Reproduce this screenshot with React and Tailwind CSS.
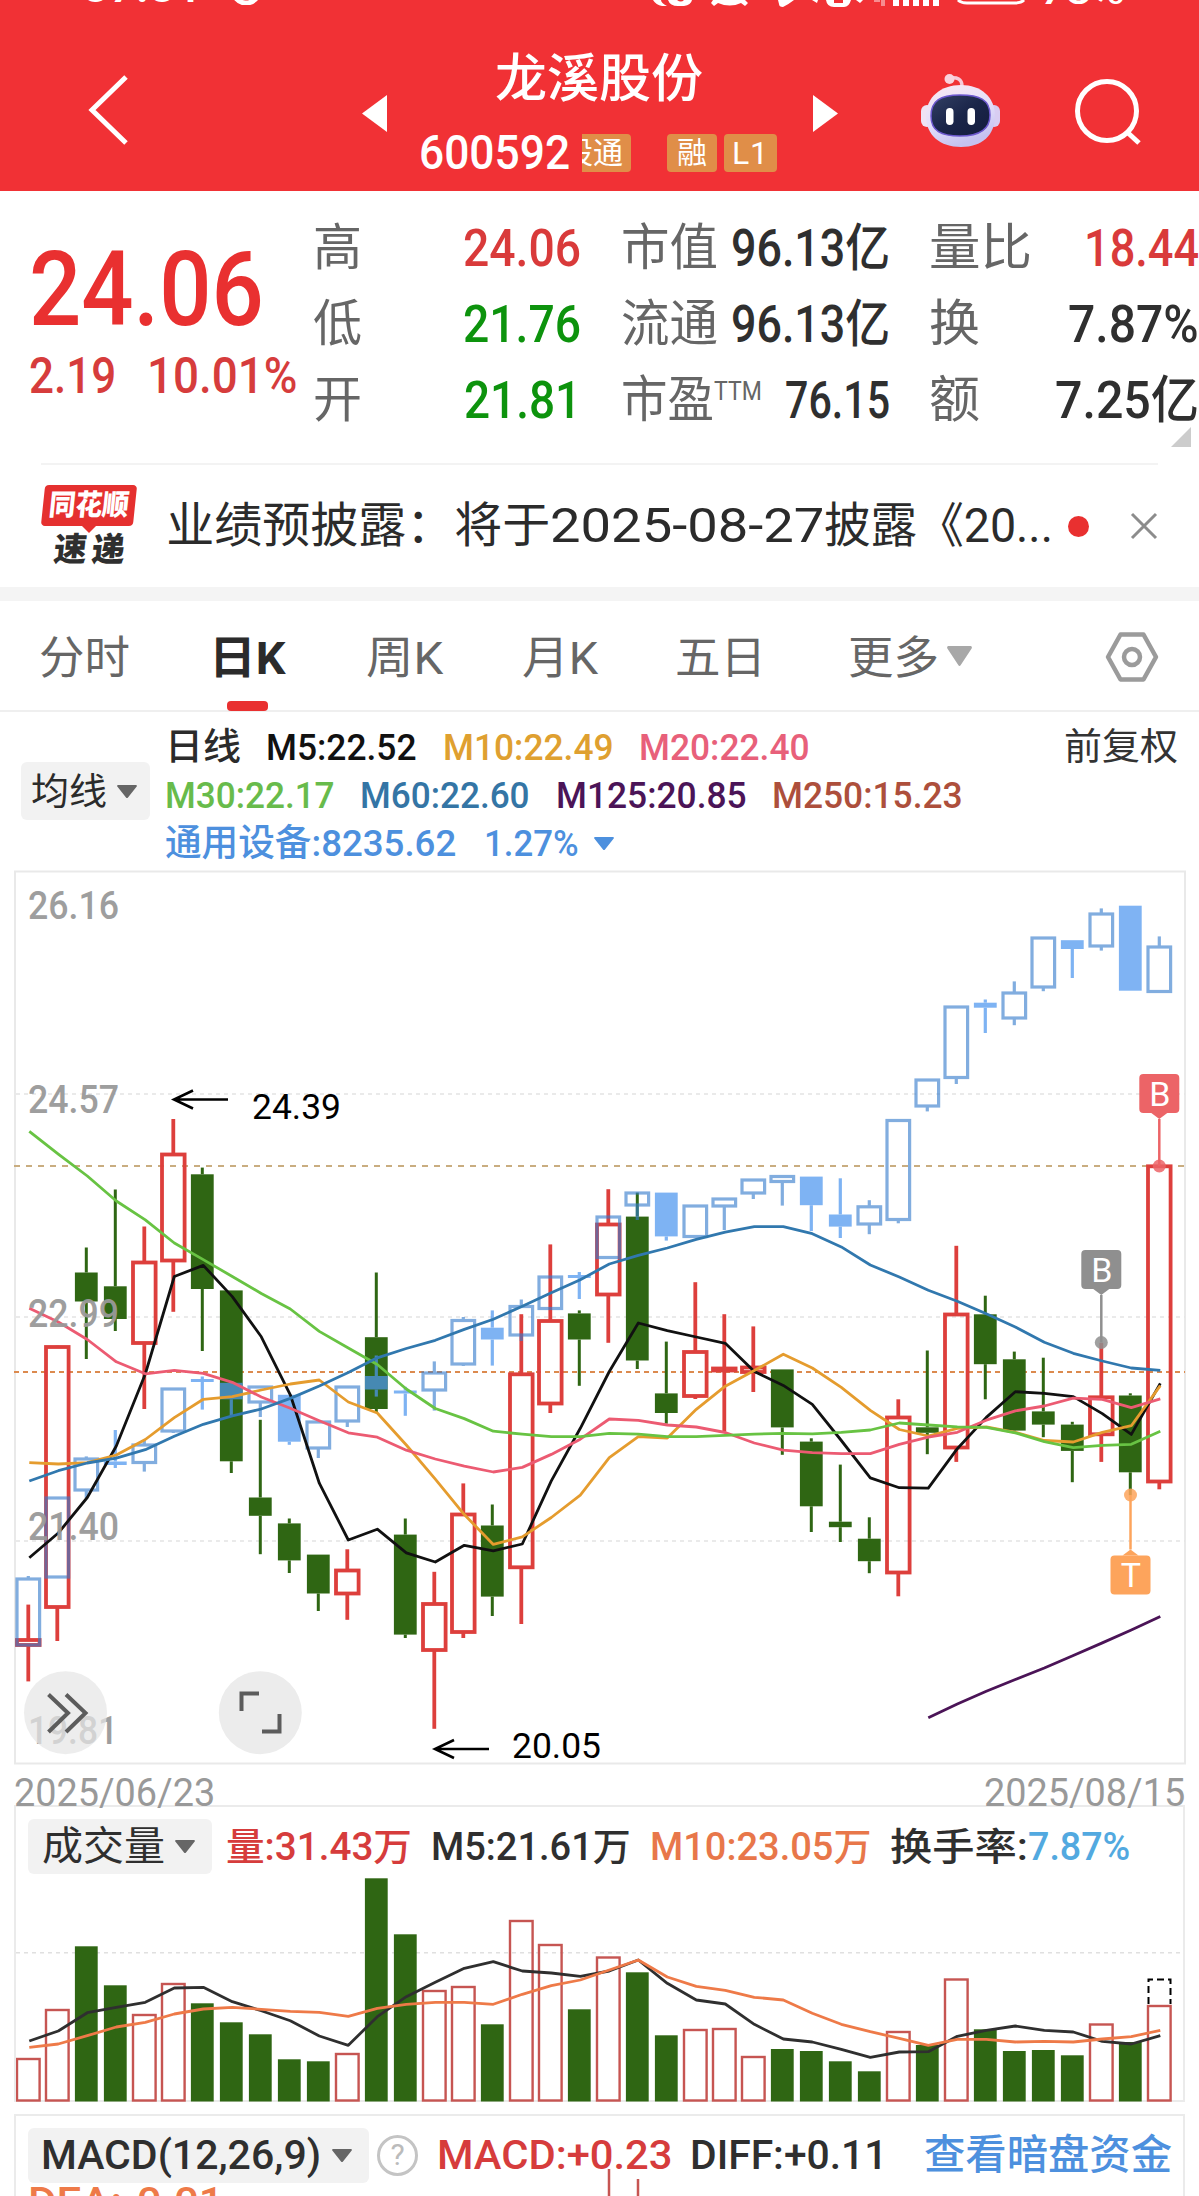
import React, { useLayoutEffect, useRef } from "react";

const FONT = "font-[Roboto,'Noto_Sans_CJK_SC',sans-serif]";

// x centre of the k-th trading day
const X0 = 28.3;
const STEP = 29;
const cx = (k) => X0 + STEP * k;

// [up, high, top, bottom, low]
const candles = [
  [1, 1604.6, 1640, 1645, 1681.4],
  [1, 1345.7, 1347, 1607, 1641],
  [0, 1247.5, 1272.5, 1301.5, 1359],
  [0, 1189.5, 1286.3, 1319, 1331],
  [1, 1226.5, 1262.5, 1343, 1409],
  [1, 1119, 1154.5, 1260.5, 1311.8],
  [0, 1167.6, 1174.3, 1289, 1351],
  [0, 1290.4, 1290.4, 1461.3, 1473],
  [0, 1419.8, 1497.5, 1515.8, 1554.2],
  [0, 1518.5, 1523.4, 1560.4, 1573],
  [0, 1554.6, 1554.6, 1593.5, 1611],
  [1, 1549.3, 1570.5, 1593.5, 1619.8],
  [0, 1272.5, 1337.2, 1409, 1412],
  [0, 1518.5, 1534.6, 1634.6, 1638],
  [1, 1571.8, 1604, 1650, 1728.8],
  [1, 1483.4, 1514.5, 1632, 1638],
  [0, 1504.5, 1525.5, 1596.6, 1616],
  [1, 1314.2, 1374.3, 1567.3, 1624],
  [1, 1244.4, 1321, 1403.5, 1413],
  [0, 1310.4, 1313.4, 1339.5, 1385.8],
  [1, 1189.2, 1224.5, 1294.5, 1342.8],
  [0, 1192.6, 1216.6, 1360.5, 1369],
  [0, 1341.6, 1393.4, 1413, 1423.7],
  [1, 1282.2, 1352, 1396, 1399],
  [1, 1314.2, 1368.5, 1370.5, 1431.6],
  [1, 1326.4, 1367.5, 1372, 1392],
  [0, 1369.4, 1369.4, 1427.4, 1454.8],
  [0, 1438.3, 1441.6, 1506.3, 1532],
  [0, 1464.6, 1521.7, 1527.2, 1542],
  [0, 1517.3, 1538.7, 1561.2, 1573.2],
  [1, 1399.3, 1417.5, 1572.5, 1596.3],
  [0, 1350.5, 1427.3, 1432.8, 1454.2],
  [1, 1245.8, 1314.5, 1447.5, 1461.9],
  [0, 1295.7, 1314.3, 1364.2, 1399.3],
  [0, 1351.6, 1359.3, 1430.6, 1431],
  [0, 1357.7, 1411.4, 1424.6, 1437.2],
  [0, 1421.8, 1424.6, 1450.9, 1482.2],
  [1, 1342.8, 1397.3, 1434.3, 1461.9],
  [0, 1393.3, 1395.5, 1472.3, 1495.3],
  [1, 1165.1, 1166.3, 1481.5, 1489.3],
];

// sector index overlay, [hollow, high, top, bottom, low]
const sector = [
  [1, 1576, 1579, 1645, 1646],
  [1, 1497, 1498, 1577, 1578],
  [1, 1456.4, 1459, 1490, 1498.4],
  [0, 1430, 1461.5, 1465, 1468],
  [1, 1440.4, 1445, 1462.5, 1471.6],
  [1, 1388, 1389, 1431, 1433],
  [0, 1376.5, 1379, 1382, 1409.6],
  [0, 1382.8, 1382.8, 1399.3, 1415.8],
  [1, 1386, 1387, 1402, 1417],
  [0, 1394.8, 1394.8, 1441.7, 1444.8],
  [1, 1421, 1422, 1448, 1458],
  [1, 1386, 1387, 1421, 1427],
  [0, 1355.5, 1376, 1389.5, 1396.6],
  [0, 1386.8, 1390.5, 1393.5, 1415.8],
  [1, 1361.4, 1373, 1390, 1410.6],
  [1, 1317, 1320.5, 1364, 1366],
  [0, 1310.4, 1327.7, 1339.5, 1365.6],
  [1, 1299.5, 1306.5, 1335, 1341],
  [1, 1276, 1277, 1308.5, 1309],
  [0, 1272, 1275, 1278, 1299],
  [1, 1216, 1217, 1257.5, 1259],
  [1, 1192, 1193, 1205, 1220],
  [0, 1192.6, 1192.6, 1236.4, 1240.6],
  [1, 1205, 1206, 1236.5, 1237],
  [1, 1198, 1199, 1206, 1230],
  [1, 1179, 1180, 1193, 1199],
  [1, 1175.5, 1176.5, 1181.5, 1205.6],
  [0, 1176.6, 1176.6, 1205.2, 1231],
  [0, 1178.3, 1214.5, 1226.6, 1238],
  [1, 1200.2, 1206.8, 1224, 1234.2],
  [1, 1119.5, 1120.5, 1219.5, 1223.3],
  [1, 1079, 1080, 1106, 1111.4],
  [1, 1006, 1007, 1077.5, 1084],
  [0, 999.5, 1002.7, 1007.7, 1033],
  [1, 981.4, 993, 1018, 1025.2],
  [1, 937, 938, 987, 991.2],
  [0, 940.2, 940.2, 949, 978],
  [1, 908.4, 914, 946, 950.6],
  [0, 905.7, 905.7, 990.7, 990.7],
  [1, 936.4, 947, 991.5, 992],
];

const averages = [
  { color: "#111111", from: 0, y: [1557.8, 1533, 1497.5, 1446, 1374, 1276.5, 1265.4, 1296.6, 1336.8, 1394.8, 1483.2, 1540, 1529.2, 1552.9, 1562, 1545.3, 1550.8, 1544, 1480.9, 1428.3, 1371.5, 1323, 1330.6, 1337, 1343.3, 1371.5, 1385.4, 1404.3, 1440.5, 1477.8, 1487.7, 1488.2, 1448.7, 1417.4, 1391.7, 1393.3, 1396.6, 1413.6, 1434.4, 1383.4] },
  { color: "#e59c2e", from: 0, y: [1462.7, 1464, 1462.7, 1455, 1439.5, 1417.6, 1399.3, 1396.6, 1390, 1384, 1380, 1402, 1413, 1445, 1479.2, 1514.6, 1544.4, 1536.9, 1517.5, 1495.2, 1457.7, 1436.7, 1438, 1409.3, 1386.2, 1370.6, 1354.2, 1368, 1387.3, 1410.3, 1429.5, 1436, 1428.4, 1426.8, 1432.3, 1440.5, 1442, 1432.3, 1425.7, 1385.6] },
  { color: "#ec5b72", from: 0, y: [1308.2, 1322, 1339.5, 1361.8, 1373.8, 1370.3, 1373.4, 1382.3, 1397, 1408.2, 1420.7, 1432.8, 1437.2, 1450.2, 1459, 1466.2, 1472, 1467.4, 1454.4, 1439.2, 1419, 1420.3, 1425, 1427, 1432.5, 1443, 1450.2, 1452.6, 1453.6, 1453.6, 1444.3, 1437.2, 1432.3, 1420.2, 1410.9, 1406, 1398.2, 1399.4, 1407.6, 1398.8] },
  { color: "#68c343", from: 0, y: [1131.4, 1154.2, 1176, 1201, 1219.8, 1243, 1259.6, 1276.5, 1293.5, 1309, 1331.4, 1348, 1364.5, 1389, 1408.5, 1418.6, 1431.2, 1434.2, 1436.7, 1436.7, 1433.3, 1434.2, 1436.7, 1436.7, 1435.4, 1434.2, 1433.3, 1433.9, 1432.3, 1430, 1423, 1425, 1426.8, 1427.3, 1432.8, 1441.6, 1447.6, 1445.4, 1444.3, 1431.2] },
  { color: "#3178ae", from: 0, y: [1481, 1470.7, 1463, 1458.2, 1449.7, 1436.3, 1424.3, 1415.8, 1409, 1398.4, 1386, 1372.5, 1357.8, 1348.5, 1340.3, 1329.4, 1319.3, 1306.2, 1292.8, 1279.7, 1264, 1255.3, 1248, 1239.3, 1232.2, 1226.7, 1226.7, 1233.7, 1246.9, 1265, 1277, 1290.2, 1301.2, 1313.8, 1327, 1342.3, 1353.3, 1361, 1368, 1370.3] },
  { color: "#4b1457", from: 31, y: [1717.8, 1704, 1691.2, 1679.5, 1668, 1655.5, 1642.9, 1630, 1616.6] },
];

// [up, top]
const volumes = [
  [1, 2059], [1, 2010], [0, 1946.3], [0, 1985.3], [1, 2015], [1, 1984], [0, 2003.3], [0, 2022.3],
  [0, 2034.3], [0, 2059.3], [0, 2061.3], [1, 2054], [0, 1878.3], [0, 1934.3], [1, 1991], [1, 1987],
  [0, 2024.3], [1, 1921], [1, 1945], [0, 2009.3], [1, 1957.5], [0, 1972.3], [0, 2035.3], [1, 2030],
  [1, 2029], [1, 2057], [0, 2049], [0, 2051], [0, 2061.3], [0, 2071.3], [1, 2032], [0, 2045],
  [1, 1979.5], [0, 2029.3], [0, 2051], [0, 2050], [0, 2055.3], [1, 2024.5], [0, 2042], [1, 2006],
];

const volumeAverages = [
  { color: "#2f2f2f", from: 0, y: [2041, 2031, 2012.7, 2007.3, 2002.3, 1988, 1987.3, 2001.7, 2010.7, 2020.7, 2036, 2045.3, 2016.7, 1996.7, 1982.3, 1968.3, 1961.7, 1971, 1973, 1976.3, 1971, 1960, 1983.3, 2000, 2004, 2024.3, 2039, 2042, 2049.3, 2057.3, 2052, 2051.7, 2036.3, 2030.3, 2026, 2030.3, 2032, 2041.3, 2044, 2035.7] },
  { color: "#ee7a48", from: 0, y: [2047.3, 2044, 2035.7, 2027, 2022.3, 2014, 2009, 2007.3, 2009.3, 2011.3, 2012.3, 2016.3, 2008.3, 2004.3, 2002.3, 2002.3, 2004.3, 1994.3, 1985.7, 1980, 1970, 1960, 1977, 1986.3, 1990.3, 1997.3, 2000, 2013.3, 2024.3, 2031.7, 2038.3, 2045.3, 2039.3, 2039.3, 2042, 2041.3, 2042, 2039, 2036.7, 2030.3] },
];

const quoteColumns = [
  {
    wrap: "ml-[17px] w-[268px]",
    rows: [
      ["高", "w-[49px]", "24.06", "w-[118px] text-[#d93a3a]"],
      ["低", "w-[49px]", "21.76", "w-[118px] text-[#0d930d]"],
      ["开", "w-[49px]", "21.81", "w-[117px] text-[#0d930d]"],
    ],
  },
  {
    wrap: "ml-[40px] w-[269px]",
    rows: [
      ["市值", "w-[97px]", "96.13亿", "w-[159px] text-[#2f2f2f]"],
      ["流通", "w-[97px]", "96.13亿", "w-[159px] text-[#2f2f2f]"],
      ["市盈", "w-[93px]", "76.15", "w-[105px] text-[#2f2f2f]", "TTM"],
    ],
  },
  {
    wrap: "ml-[39px] w-[270px]",
    rows: [
      ["量比", "w-[103px]", "18.44", "w-[115px] text-[#d93a3a]"],
      ["换", "w-[51px]", "7.87%", "w-[131px] text-[#2f2f2f]"],
      ["额", "w-[51px]", "7.25亿", "w-[144px] text-[#2f2f2f]"],
    ],
  },
];

// Text squeezed (or stretched) horizontally to the width of its box
function Fit({ className = "", children }) {
  const box = useRef(null);
  const text = useRef(null);

  useLayoutEffect(() => {
    const ratio = box.current.clientWidth / text.current.offsetWidth;
    text.current.style.transform = `scaleX(${ratio})`;
  }, [children]);

  return (
    <span ref={box} className={`block shrink-0 whitespace-nowrap leading-none ${className}`}>
      <span ref={text} className="inline-block origin-left leading-none">
        {children}
      </span>
    </span>
  );
}

function Caret({ className = "" }) {
  return (
    <svg viewBox="0 0 20 13" className={`shrink-0 ${className}`} preserveAspectRatio="none">
      <path d="M1 0h18a1 1 0 0 1 .7 1.600L11 12.400a1.300 1.300 0 0 1-2 0L.3 1.600A1 1 0 0 1 1 0z" fill="currentColor" />
    </svg>
  );
}

function StatusBar() {
  return (
    <div className="flex h-[8px] items-end overflow-hidden pl-[82px] text-white">
      <Fit className="mb-[-1px] w-[120px] text-[40px] font-medium">07:01</Fit>
      <svg className="ml-[26px] mb-[3px] h-[26px] w-[36px]" viewBox="0 0 36 26">
        <path d="M5 10a13 13 0 0 0 26 2" fill="none" stroke="#fff" strokeWidth="5" />
      </svg>
      <svg className="ml-[388px] h-[8px] w-[380px]" viewBox="0 0 380 8">
        <path d="M1 0q3 5 9 6h5q-6-3-6-6zM16 0q2 6 10 6h6q7-1 8-6h-8q-3 3-7 0z" fill="#fff" />
        <path d="M61 0h32l3 3-3 3-4-3q-11 5-23 0l-4 3-3-3z" fill="#fff" />
        <path d="M126 0h16q-5 4-11 7-4 0-4-3z" fill="#fff" />
        <path d="M160 0l5 3 1-3zM174 0q1 7 8 7h10q5 0 7-7h-8v3h-9V0zM204 0l4 3 3-3z" fill="#fff" />
        <path d="M222 0h6v2h-6zM229 0h4v6h-4z" fill="#fff" opacity=".45" />
        <path d="M241 0h6v6h-6zM251 0h6v6h-6zM261 0h6v6h-6zM271 0h6v6h-6zM281 0h6v6h-6z" fill="#fff" />
        <path d="M306 0q3 3 9 3h48q6 0 9-3" fill="none" stroke="#fff" strokeWidth="3" />
      </svg>
      <Fit className="mb-[-2px] ml-[8px] w-[84px] text-[36px] font-medium">78%</Fit>
    </div>
  );
}

function Robot() {
  return (
    <svg className="h-[74px] w-[80px]" viewBox="0 0 80 74">
      <defs>
        <linearGradient id="shell" x1="0" y1="0" x2="0.400" y2="1">
          <stop offset="0" stopColor="#fbeaf2" />
          <stop offset=".6" stopColor="#e3defa" />
          <stop offset="1" stopColor="#c5c2f0" />
        </linearGradient>
        <linearGradient id="visor" x1="0" y1="0" x2="1" y2="1">
          <stop offset="0" stopColor="#334064" />
          <stop offset=".5" stopColor="#1a2549" />
          <stop offset="1" stopColor="#141c3d" />
        </linearGradient>
      </defs>
      <path d="M29 5c7-1 12 1 12 8" fill="none" stroke="#f7c9d8" strokeWidth="3.500" />
      <circle cx="28.500" cy="6" r="5" fill="#f9d3dd" />
      <rect x="0" y="32" width="12" height="22" rx="6" fill="#efe3f4" />
      <rect x="67" y="32" width="12" height="22" rx="6" fill="#d8cdf2" />
      <path d="M40 12c20 0 34 12 34 31S61 74 40 74 5 62 5 43 20 12 40 12z" fill="url(#shell)" />
      <path d="M39 22c20 0 30 5 30 20S58 63 39 63 10 58 10 43s9-21 29-21z" fill="url(#visor)" stroke="#6d59cf" strokeWidth="1.500" />
      <rect x="25" y="35" width="7.500" height="17" rx="3.700" fill="#fff" />
      <rect x="46.500" y="35" width="7.500" height="17" rx="3.700" fill="#fff" />
    </svg>
  );
}

function Header() {
  return (
    <header className="h-[191px] overflow-hidden bg-[#f13135] text-white">
      <StatusBar />
      <div className="flex h-[183px] items-start">
        <svg className="ml-[86px] mt-[66px] h-[72px] w-[44px]" viewBox="0 0 44 72">
          <path d="M40 3L6 36l34 33" fill="none" stroke="#fff" strokeWidth="5" />
        </svg>
        <svg className="ml-[231px] mt-[86px] h-[39px] w-[27px]" viewBox="0 0 27 39">
          <path d="M26 1v37L1 19.500z" fill="#fff" />
        </svg>
        <div className="ml-[31px] flex w-[361px] flex-col">
          <Fit className="ml-[76px] mt-[46px] w-[208px] text-[52px] font-medium">龙溪股份</Fit>
          <div className="mt-[22px] flex items-center">
            <Fit className="w-[151px] text-[49px] font-medium">600592</Fit>
            <div className="ml-[12px] flex h-[38px] w-[49px] items-center justify-end overflow-hidden rounded-r-[4px] bg-[#e08e48] pr-[8px] text-[30px] leading-none">
              <span className="shrink-0">股通</span>
            </div>
            <div className="ml-[36px] flex h-[38px] w-[50px] items-center justify-center rounded-[4px] bg-[#e08e48] text-[30px] leading-none">
              融
            </div>
            <div className="ml-[7px] flex h-[38px] w-[53px] items-center justify-center rounded-[4px] bg-[#e08e48] text-[32px] leading-none tracking-wide">
              L1
            </div>
          </div>
        </div>
        <svg className="ml-[32px] mt-[86px] h-[39px] w-[27px]" viewBox="0 0 27 39">
          <path d="M1 1v37l25-18.500z" fill="#fff" />
        </svg>
        <div className="ml-[82px] mt-[65px]">
          <Robot />
        </div>
        <svg className="ml-[73px] mt-[70px] h-[68px] w-[68px]" viewBox="0 0 68 68">
          <circle cx="33" cy="33" r="29.500" fill="none" stroke="#fff" strokeWidth="5" />
          <path d="M53 54l12 11" stroke="#fff" strokeWidth="5" />
        </svg>
      </div>
    </header>
  );
}

function Quote() {
  return (
    <section className="flex h-[272px] pt-[19px]">
      <div className="ml-[29px] w-[267px] text-[#e93030]">
        <Fit className="mt-[28px] w-[235px] text-[103px] font-medium">24.06</Fit>
        <div className="mt-[10px] flex font-medium text-[#d63c3c]">
          <Fit className="w-[87px] text-[50px]">2.19</Fit>
          <Fit className="ml-[31px] w-[150px] text-[50px]">10.01%</Fit>
        </div>
      </div>
      {quoteColumns.map((col, i) => (
        <div key={i} className={`${col.wrap} shrink-0`}>
          {col.rows.map(([label, labelWidth, value, valueStyle, sup]) => (
            <div key={label} className="flex h-[76px] items-center justify-between">
              <div className="flex text-[#666]">
                <Fit className={`${labelWidth} text-[50px]`}>{label}</Fit>
                {sup && <Fit className="mt-[4px] w-[48px] text-[25px]">{sup}</Fit>}
              </div>
              <Fit className={`${valueStyle} text-[51px] font-medium`}>{value}</Fit>
            </div>
          ))}
          {i === 2 && (
            <svg className="ml-auto mr-[8px] mt-[-11px] h-[20px] w-[20px]" viewBox="0 0 20 20">
              <path d="M20 0v20H0z" fill="#ccc" />
            </svg>
          )}
        </div>
      ))}
    </section>
  );
}

function News() {
  return (
    <section className="mx-[41px] flex h-[124px] items-center border-t-2 border-[#f3f3f3]">
      <div className="flex h-[82px] w-[97px] flex-col items-center">
        <div className="flex h-[41px] w-[92px] -skew-x-6 items-center justify-center rounded-[4px] bg-[#e5302f]">
          <Fit className="w-[80px] text-[29px] font-black text-white">同花顺</Fit>
        </div>
        <svg className="h-[7px] w-[14px]" viewBox="0 0 14 7">
          <path d="M0 0h14L7 7z" fill="#e5302f" />
        </svg>
        <div className="flex -skew-x-6 gap-[5px] text-[33px] font-black leading-none text-[#2f2f2f]">
          <span>速</span>
          <span>递</span>
        </div>
      </div>
      <div className="ml-[29px] flex w-[887px] text-[48px] text-[#2b2b2b]">
        <Fit className="w-[384px]">业绩预披露：将于</Fit>
        <Fit className="w-[274px]">2025-08-27</Fit>
        <Fit className="w-[229px]">披露《20...</Fit>
      </div>
      <div className="ml-[15px] h-[21px] w-[21px] rounded-full bg-[#e93030]" />
      <svg className="ml-[41px] h-[28px] w-[28px] shrink-0" viewBox="0 0 28 28">
        <path d="M2 2l24 24M26 2L2 26" stroke="#8c8c8c" strokeWidth="3" />
      </svg>
    </section>
  );
}

function Tabs() {
  return (
    <nav className="flex h-[111px] items-start border-b-2 border-[#efefef] pt-[35px] text-[45px] text-[#666]">
      <Fit className="ml-[39px] w-[91px]">分时</Fit>
      <div className="ml-[79px] flex w-[76px] flex-col items-center">
        <Fit className="w-[77px] font-bold text-[#2b2b2b]">日K</Fit>
        <div className="mt-[20px] h-[10px] w-[41px] rounded-[4px] bg-[#e93030]" />
      </div>
      <Fit className="ml-[81px] w-[77px]">周K</Fit>
      <Fit className="ml-[79px] w-[76px]">月K</Fit>
      <Fit className="ml-[77px] w-[91px]">五日</Fit>
      <Fit className="ml-[82px] w-[91px]">更多</Fit>
      <Caret className="ml-[8px] mt-[10px] h-[20px] w-[25px] text-[#a8a8a8]" />
      <svg className="ml-[133px] mt-[-5px] h-[52px] w-[54px]" viewBox="0 0 54 52">
        <path d="M15.500 3.500h23L51 26 38.500 48.500h-23L3 26z" fill="none" stroke="#9b9b9b" strokeWidth="4.500" strokeLinejoin="round" />
        <circle cx="27" cy="26" r="8" fill="none" stroke="#9b9b9b" strokeWidth="4.500" />
      </svg>
    </nav>
  );
}

function Averages() {
  return (
    <section className="flex h-[155px] pt-[14px] text-[37px] font-medium">
      <div className="ml-[21px] mt-[36px] flex h-[58px] w-[129px] items-center rounded-[6px] bg-[#f2f2f2] pl-[10px]">
        <Fit className="mt-[3px] w-[76px] font-normal text-[#2b2b2b]">均线</Fit>
        <Caret className="ml-[10px] h-[13px] w-[20px] text-[#666]" />
      </div>
      <div className="ml-[15px] mt-[3px] flex w-[1013px] flex-col gap-[11px]">
        <div className="flex">
          <Fit className="w-[76px] text-[#2b2b2b]">日线</Fit>
          <Fit className="ml-[25px] w-[151px] text-[#111]">M5:22.52</Fit>
          <Fit className="ml-[26px] w-[171px] text-[#dfa030]">M10:22.49</Fit>
          <Fit className="ml-[25px] w-[171px] text-[#e8607a]">M20:22.40</Fit>
          <Fit className="ml-auto w-[114px] font-normal text-[#333]">前复权</Fit>
        </div>
        <div className="flex">
          <Fit className="w-[170px] text-[#68bb4b]">M30:22.17</Fit>
          <Fit className="ml-[25px] w-[170px] text-[#3475a5]">M60:22.60</Fit>
          <Fit className="ml-[26px] w-[191px] text-[#4b1457]">M125:20.85</Fit>
          <Fit className="ml-[25px] w-[191px] text-[#ad4f3c]">M250:15.23</Fit>
        </div>
        <div className="flex items-center text-[#4d90de]">
          <Fit className="w-[291px]">通用设备:8235.62</Fit>
          <Fit className="ml-[28px] w-[95px]">1.27%</Fit>
          <Caret className="ml-[15px] h-[13px] w-[20px]" />
        </div>
      </div>
    </section>
  );
}

function Candle({ x, color, width, hollow, data, opacity = 1 }) {
  const [, high, top, bottom, low] = data;
  return (
    <g stroke={color} strokeWidth={width} opacity={opacity}>
      {high < top && <line x1={x} x2={x} y1={high} y2={top} />}
      {low > bottom && <line x1={x} x2={x} y1={bottom} y2={low} />}
      {hollow ? (
        <rect x={x - 11.300} y={top} width="22.600" height={bottom - top} fill="none" />
      ) : (
        <rect x={x - 11.400} y={top} width="22.800" height={bottom - top} fill={color} stroke="none" />
      )}
    </g>
  );
}

function Lines({ series }) {
  return series.map((s) => (
    <polyline
      key={s.color}
      points={s.y.map((y, i) => `${cx(s.from + i) + 1},${y}`).join(" ")}
      fill="none"
      stroke={s.color}
      strokeWidth="2.800"
      strokeLinejoin="round"
    />
  ));
}

// Trade marker: a tag with a stem that ends in a dot on the candle
function Marker({ x, tag, dot, color, letter }) {
  const below = tag > dot;
  const edge = below ? tag - 19.500 : tag + 19.500;
  const tip = below ? edge - 6 : edge + 6;
  return (
    <g>
      <line x1={x} x2={x} y1={tip} y2={dot} stroke={color} strokeWidth="2.500" />
      <ellipse cx={x} cy={dot} rx="6.500" ry="6.500" fill={color} opacity=".85" />
      <rect x={x - 20} y={tag - 19.500} width="40" height="39" rx="4" fill={color} />
      <path d={`M${x - 8} ${edge}L${x} ${tip}L${x + 8} ${edge}z`} fill={color} />
      <text x={x + 0.500} y={tag + 12} textAnchor="middle" fontSize="34" fill="#fff">
        {letter}
      </text>
    </g>
  );
}

function KLineChart() {
  return (
    <svg className="block h-[898px] w-[1199px]" viewBox="0 867 1199 898">
      <rect x="15" y="871.500" width="1170" height="892" fill="none" stroke="#e9e9e9" strokeWidth="2" />
      {[1094, 1317, 1541].map((y) => (
        <line key={y} x1="16" x2="1185" y1={y} y2={y} stroke="#e4e4e4" strokeWidth="1.500" strokeDasharray="4 4" />
      ))}
      <line x1="14" x2="1185" y1="1166" y2="1166" stroke="#c9ad80" strokeWidth="2" strokeDasharray="6 6" />
      <line x1="14" x2="1185" y1="1372" y2="1372" stroke="#dc8a4e" strokeWidth="2" strokeDasharray="5 4" />

      {candles.map((c, k) => (
        <Candle key={k} x={cx(k)} data={c} hollow={c[0] === 1} color={c[0] ? "#dd3f3c" : "#2f6613"} width={c[0] ? 3.800 : 3} />
      ))}
      {sector.map((c, k) => (
        <Candle
          key={k}
          x={cx(k)}
          data={c}
          hollow={c[0] === 1}
          color={c[0] ? "#357ccd" : "#4f97ef"}
          opacity={c[0] ? 0.620 : 0.730}
          width={3.200}
        />
      ))}
      <Lines series={averages} />

      {/* Price scale */}
      <g fontSize="38" fontWeight="500" fill="#999" opacity=".95">
        <text x="28" y="919" textLength="91" lengthAdjust="spacingAndGlyphs">26.16</text>
        <text x="28" y="1113" textLength="91" lengthAdjust="spacingAndGlyphs">24.57</text>
        <text x="28" y="1327" textLength="91" lengthAdjust="spacingAndGlyphs">22.99</text>
        <text x="28" y="1540" textLength="91" lengthAdjust="spacingAndGlyphs">21.40</text>
        <text x="28" y="1744" textLength="90" lengthAdjust="spacingAndGlyphs">19.81</text>
      </g>

      {/* Period high and low */}
      <g fill="none" stroke="#000" strokeWidth="2.600">
        <path d="M228 1099.500H174M193 1090.500L174 1099.500L193 1108.500" />
        <path d="M489 1749H435M454 1740L435 1749L454 1758" />
      </g>
      <g fontSize="35" fill="#000">
        <text x="252" y="1119" textLength="89" lengthAdjust="spacingAndGlyphs">24.39</text>
        <text x="512" y="1758" textLength="89" lengthAdjust="spacingAndGlyphs">20.05</text>
      </g>

      <Marker x={1159.300} tag={1093.500} dot={1166} color="#ec6467" letter="B" />
      <Marker x={1101.300} tag={1269.500} dot={1342.500} color="#8f8f8f" letter="B" />
      <Marker x={1130.500} tag={1575} dot={1495} color="#fda45c" letter="T" />

      {/* Floating chart buttons */}
      <circle cx="65.500" cy="1712.700" r="41.500" fill="#e6e6e6" opacity=".72" />
      <circle cx="260.300" cy="1712.700" r="41.500" fill="#ececec" />
      <g fill="none" stroke="#5c5c5c" strokeWidth="4">
        <path d="M48.500 1694.500L68 1713L48.500 1732M66 1694.500L85.500 1713L66 1732" />
        <path d="M241.500 1711V1693.500H259M279.500 1714V1731.500H262" />
      </g>
    </svg>
  );
}

function VolumePane() {
  return (
    <section className="mx-[14px] h-[297px] border-2 border-[#ebebeb]">
      <div className="flex h-[67px] items-center pt-[12px] text-[38px] font-medium text-[#2f2f2f]">
        <div className="ml-[12px] flex h-[55px] w-[184px] shrink-0 items-center rounded-[6px] bg-[#f2f2f2] pl-[14px]">
          <Fit className="w-[123px] text-[40px] font-normal">成交量</Fit>
          <Caret className="ml-[10px] h-[13px] w-[20px] text-[#666]" />
        </div>
        <Fit className="ml-[14px] w-[186px] text-[#d63c3c]">量:31.43万</Fit>
        <Fit className="ml-[19px] w-[200px]">M5:21.61万</Fit>
        <Fit className="ml-[19px] w-[221px] text-[#e8774a]">M10:23.05万</Fit>
        <Fit className="ml-[19px] w-[138px]">换手率:</Fit>
        <Fit className="w-[102px] text-[#52a9e0]">7.87%</Fit>
      </div>
      <svg className="block h-[228px] w-[1167px]" viewBox="16 1874 1167 228">
        <line x1="16" x2="1185" y1="1952.700" y2="1952.700" stroke="#e0e0e0" strokeWidth="1.500" strokeDasharray="4 4" />
        {volumes.map(([up, top], k) =>
          up ? (
            <rect key={k} x={cx(k) - 11.300} y={top} width="22.600" height={2100.500 - top} fill="none" stroke="#c65552" strokeWidth="2.400" />
          ) : (
            <rect key={k} x={cx(k) - 11.400} y={top} width="22.800" height={2101.500 - top} fill="#2f6613" />
          )
        )}
        <path d="M1148.500 2004v-24.500h22V2004" fill="none" stroke="#000" strokeWidth="2" strokeDasharray="7 4" />
        <Lines series={volumeAverages} />
      </svg>
    </section>
  );
}

function MacdPane() {
  return (
    <section className="mx-[14px] mt-[12px] h-[83px] overflow-hidden border-x-2 border-t-2 border-[#ebebeb]">
      <div className="flex h-[67px] items-center pt-[11px] text-[41px] font-medium text-[#2f2f2f]">
        <div className="ml-[12px] flex h-[55px] w-[341px] shrink-0 items-center rounded-[6px] bg-[#f2f2f2] pl-[13px]">
          <Fit className="w-[280px]">MACD(12,26,9)</Fit>
          <Caret className="ml-[11px] h-[13px] w-[20px] text-[#666]" />
        </div>
        <div className="ml-[8px] flex h-[41px] w-[41px] shrink-0 items-center justify-center rounded-full border-[3px] border-[#c4c4c4] text-[30px] font-normal leading-none text-[#bbb]">
          ?
        </div>
        <Fit className="ml-[19px] w-[236px] text-[#d63c3c]">MACD:+0.23</Fit>
        <Fit className="ml-[17px] w-[197px]">DIFF:+0.11</Fit>
        <Fit className="ml-[37px] w-[248px] text-[#4d90de]">查看暗盘资金</Fit>
      </div>
      <div className="flex items-start">
        <Fit className="ml-[12px] w-[196px] text-[40px] font-medium text-[#ee7a48]">DEA:-0.01</Fit>
        <svg className="ml-[383px] mt-[-14px] h-[40px] w-[40px]" viewBox="0 0 40 40">
          <path d="M2 0v40M31 10v30" stroke="#c65552" strokeWidth="2.500" />
        </svg>
      </div>
    </section>
  );
}

export default function App() {
  return (
    <main className={`h-[2196px] w-[1199px] overflow-hidden bg-white ${FONT}`}>
      <Header />
      <Quote />
      <News />
      <div className="h-[14px] bg-[#f4f4f4]" />
      <Tabs />
      <Averages />
      <KLineChart />
      <div className="relative mx-[14px] flex h-[40px] items-end justify-between text-[38px] text-[#999]">
        <Fit className="mb-[-7px] w-[201px]">2025/06/23</Fit>
        <Fit className="mb-[-7px] w-[201px]">2025/08/15</Fit>
      </div>
      <VolumePane />
      <MacdPane />
    </main>
  );
}
